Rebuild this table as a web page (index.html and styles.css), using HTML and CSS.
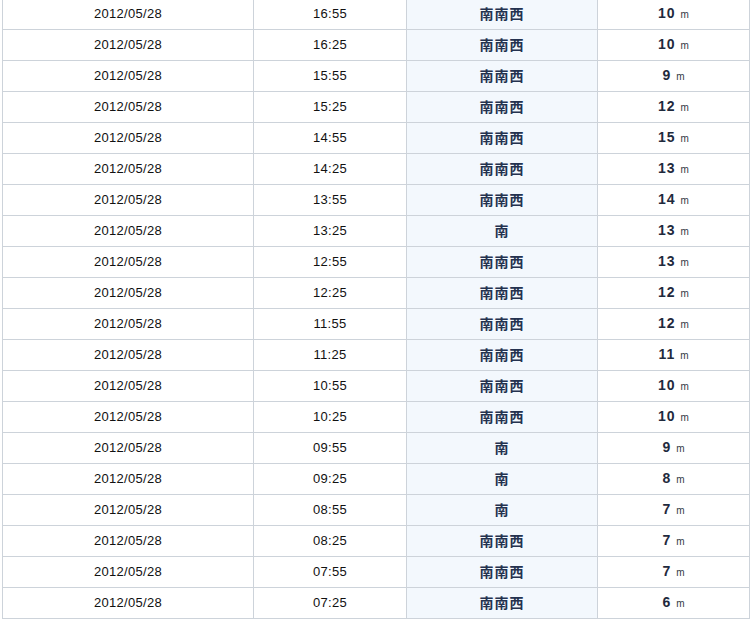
FILE: index.html
```html
<!DOCTYPE html>
<html lang="ja">
<head>
<meta charset="utf-8">
<title>風向・風速</title>
<link rel="stylesheet" href="styles.css">
</head>
<body>
<table class="wind">
<colgroup><col class="c-date"><col class="c-time"><col class="c-dir"><col class="c-speed"></colgroup>
<tbody>
<tr><td class="date">2012/05/28</td><td class="time">16:55</td><td class="dir">南南西</td><td class="speed">10<span class="unit">m</span></td></tr>
<tr><td class="date">2012/05/28</td><td class="time">16:25</td><td class="dir">南南西</td><td class="speed">10<span class="unit">m</span></td></tr>
<tr><td class="date">2012/05/28</td><td class="time">15:55</td><td class="dir">南南西</td><td class="speed">9<span class="unit">m</span></td></tr>
<tr><td class="date">2012/05/28</td><td class="time">15:25</td><td class="dir">南南西</td><td class="speed">12<span class="unit">m</span></td></tr>
<tr><td class="date">2012/05/28</td><td class="time">14:55</td><td class="dir">南南西</td><td class="speed">15<span class="unit">m</span></td></tr>
<tr><td class="date">2012/05/28</td><td class="time">14:25</td><td class="dir">南南西</td><td class="speed">13<span class="unit">m</span></td></tr>
<tr><td class="date">2012/05/28</td><td class="time">13:55</td><td class="dir">南南西</td><td class="speed">14<span class="unit">m</span></td></tr>
<tr><td class="date">2012/05/28</td><td class="time">13:25</td><td class="dir">南</td><td class="speed">13<span class="unit">m</span></td></tr>
<tr><td class="date">2012/05/28</td><td class="time">12:55</td><td class="dir">南南西</td><td class="speed">13<span class="unit">m</span></td></tr>
<tr><td class="date">2012/05/28</td><td class="time">12:25</td><td class="dir">南南西</td><td class="speed">12<span class="unit">m</span></td></tr>
<tr><td class="date">2012/05/28</td><td class="time">11:55</td><td class="dir">南南西</td><td class="speed">12<span class="unit">m</span></td></tr>
<tr><td class="date">2012/05/28</td><td class="time">11:25</td><td class="dir">南南西</td><td class="speed">11<span class="unit">m</span></td></tr>
<tr><td class="date">2012/05/28</td><td class="time">10:55</td><td class="dir">南南西</td><td class="speed">10<span class="unit">m</span></td></tr>
<tr><td class="date">2012/05/28</td><td class="time">10:25</td><td class="dir">南南西</td><td class="speed">10<span class="unit">m</span></td></tr>
<tr><td class="date">2012/05/28</td><td class="time">09:55</td><td class="dir">南</td><td class="speed">9<span class="unit">m</span></td></tr>
<tr><td class="date">2012/05/28</td><td class="time">09:25</td><td class="dir">南</td><td class="speed">8<span class="unit">m</span></td></tr>
<tr><td class="date">2012/05/28</td><td class="time">08:55</td><td class="dir">南</td><td class="speed">7<span class="unit">m</span></td></tr>
<tr><td class="date">2012/05/28</td><td class="time">08:25</td><td class="dir">南南西</td><td class="speed">7<span class="unit">m</span></td></tr>
<tr><td class="date">2012/05/28</td><td class="time">07:55</td><td class="dir">南南西</td><td class="speed">7<span class="unit">m</span></td></tr>
<tr><td class="date">2012/05/28</td><td class="time">07:25</td><td class="dir">南南西</td><td class="speed">6<span class="unit">m</span></td></tr>
</tbody>
</table>
</body>
</html>
```

FILE: styles.css
```css
html, body {
  margin: 0;
  padding: 0;
  background: #ffffff;
}

body {
  overflow: hidden;
}

.wind {
  border-collapse: collapse;
  table-layout: fixed;
  width: 747px;
  margin: -2px 0 0 2px;
  font-family: "Liberation Sans", "Noto Sans CJK JP", sans-serif;
}

.c-date { width: 251px; }
.c-time { width: 153px; }
.c-dir { width: 191px; }
.c-speed { width: 152px; }

.wind td {
  border: 1px solid #cdd3da;
  height: 30px;
  padding: 0;
  text-align: center;
  vertical-align: middle;
  line-height: 16px;
}

.date, .time {
  font-size: 13px;
  color: #111111;
  letter-spacing: 0.3px;
}

.wind td.dir {
  background: #f3f8fd;
  font-family: "Noto Sans CJK JP", sans-serif;
  font-weight: bold;
  font-size: 14px;
  letter-spacing: 1px;
  color: #24324f;
  padding-bottom: 3px;
  height: 27px;
}

.speed {
  font-family: "Liberation Sans", sans-serif;
  font-weight: bold;
  font-size: 14px;
  color: #1f2a3d;
  letter-spacing: 1px;
}

.unit {
  font-weight: normal;
  font-size: 10px;
  margin-left: 5px;
  letter-spacing: 0;
  color: #333a44;
}
```
